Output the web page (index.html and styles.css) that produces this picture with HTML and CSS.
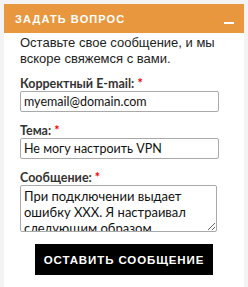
FILE: index.html
```html
<!DOCTYPE html>
<html lang="ru">
<head>
    <meta charset="UTF-8">
    <title>Задать вопрос</title>
    <link rel="stylesheet" href="styles.css">
</head>
<body>
    <div class="widget">
        <div class="widget-head">
            <span class="widget-title">Задать вопрос</span>
            <span class="widget-toggle"></span>
        </div>
        <form class="ask-form">
            <p class="intro">Оставьте свое сообщение, и мы вскоре свяжемся с вами.</p>

            <label for="email">Корректный E-mail: <span class="req">*</span></label>
            <input type="text" id="email" value="myemail@domain.com">

            <label for="subject">Тема: <span class="req">*</span></label>
            <input type="text" id="subject" value="Не могу настроить VPN">

            <label for="message">Сообщение: <span class="req">*</span></label>
            <textarea id="message">При подключении выдает ошибку XXX. Я настраивал следующим образом</textarea>

            <div class="actions">
                <button type="button">Оставить сообщение</button>
            </div>
        </form>
    </div>
</body>
</html>
```
FILE: styles.css
```css
body {
    margin: 0;
    padding: 4px 4px 0 4px;
    background-color: #f3f3f3;
    font-family: "Liberation Sans", Arial, sans-serif;
}

.widget {
    background-color: #fff;
    min-height: 283px;
}

.widget-head {
    display: flex;
    align-items: center;
    justify-content: space-between;
    height: 29px;
    padding: 0 10px 0 11px;
    background-color: #e8973f;
}

.widget-title {
    color: #fff;
    font-size: 11px;
    font-weight: bold;
    letter-spacing: 1.1px;
    text-transform: uppercase;
    margin-top: 1px;
}

.widget-toggle {
    display: block;
    width: 10px;
    height: 2px;
    margin-top: 8px;
    background-color: #fff;
}

.ask-form {
    padding: 0 25px 0 16px;
}

.intro {
    margin: 0 0 10px 0;
    padding-top: 2px;
    font-size: 13px;
    line-height: 16px;
    color: #222;
}

label {
    display: block;
    font-family: Lato, sans-serif;
    font-size: 12.5px;
    font-weight: bold;
    color: #333;
    line-height: 14px;
    margin-bottom: 0;
}

.req {
    color: #e00;
}

input[type="text"] {
    display: block;
    box-sizing: border-box;
    width: 199px;
    height: 21px;
    margin: 0 0 12px 0;
    padding: 0 3px;
    border: 1px solid #a9a9a9;
    border-radius: 2px;
    font-family: Lato, sans-serif;
    font-size: 12.5px;
    color: #111;
}

textarea {
    display: block;
    box-sizing: border-box;
    width: 197px;
    height: 47px;
    margin: 0;
    padding: 2px 3px;
    border: 1px solid #a9a9a9;
    border-radius: 2px;
    font-family: Lato, sans-serif;
    font-size: 13px;
    line-height: 16px;
    color: #111;
    overflow: hidden;
    resize: vertical;
}

.actions {
    padding: 12px 0 0 15px;
}

button {
    width: 178px;
    height: 31px;
    padding: 0;
    background-color: #000;
    color: #fff;
    border: none;
    font-family: "Liberation Sans", Arial, sans-serif;
    font-size: 11.5px;
    font-weight: bold;
    letter-spacing: 0.9px;
    text-transform: uppercase;
    cursor: pointer;
}
```
